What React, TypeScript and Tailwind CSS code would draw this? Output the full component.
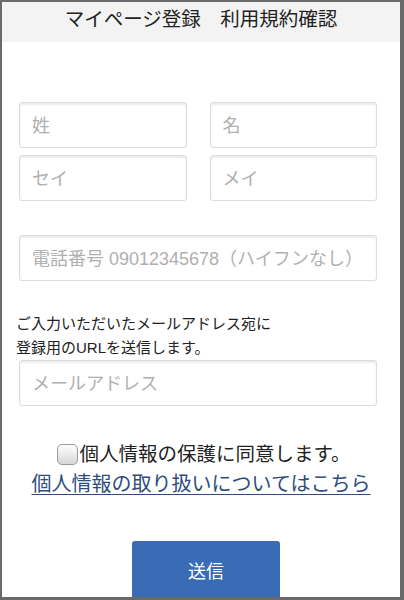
import React from "react";

const font = { fontFamily: '"Liberation Sans", "Noto Sans CJK JP", sans-serif' };

function Field({ placeholder, className = "" }: { placeholder: string; className?: string }) {
  return (
    <input
      type="text"
      placeholder={placeholder}
      className={`h-[46px] rounded-[3px] border border-[#dcdcdc] bg-white px-[12px] pt-[3px] text-[18px] text-[#333] shadow-[inset_0_2px_2px_rgba(0,0,0,0.08)] outline-none placeholder:text-[#b0b0b0] ${className}`}
    />
  );
}

export default function App() {
  return (
    <div
      style={font}
      className="h-[600px] w-[404px] overflow-hidden border-t-2 border-r-4 border-b-[3px] border-l-2 border-[#6a6a6a] bg-white"
    >
      <header className="flex h-[40px] items-start justify-center bg-[#f3f3f3] pt-[3px] text-[19.5px] leading-[28px] text-[#222]">
        マイページ登録　利用規約確認
      </header>

      <div className="flex flex-col pr-[23px] pl-[17px]">
        <div className="mt-[60px] grid grid-cols-2 gap-x-[23px] gap-y-[7px]">
          <Field placeholder="姓" />
          <Field placeholder="名" />
          <Field placeholder="セイ" />
          <Field placeholder="メイ" />
        </div>

        <Field placeholder="電話番号 09012345678（ハイフンなし）" className="mt-[34px] w-full" />

        <p className="mt-[31px] -ml-[3px] text-[15px] leading-[24px] text-[#222]">
          ご入力いただいたメールアドレス宛に
          <br />
          登録用のURLを送信します。
        </p>

        <Field placeholder="メールアドレス" className="w-full" />

        <label className="mt-[34px] flex items-center justify-center text-[19.5px] leading-[28px] text-[#222]">
          <span className="mr-[1px] ml-[12px] inline-block h-[21px] w-[21px] rounded-[5px] border border-[#9a9a9a] bg-gradient-to-b from-white to-[#d6d6d6]" />
          個人情報の保護に同意します。
        </label>

        <a
          href="#"
          className="mt-[2px] ml-[6px] text-center text-[20px] leading-[28px] text-[#2d4d7c] underline decoration-1 underline-offset-[3px]"
        >
          個人情報の取り扱いについてはこちら
        </a>

        <div className="mt-[43px] flex justify-center">
          <button className="ml-[16px] h-[62px] w-[148px] rounded-[3px] bg-[#3a6cb6] text-[18px] text-white">
            送信
          </button>
        </div>
      </div>
    </div>
  );
}
